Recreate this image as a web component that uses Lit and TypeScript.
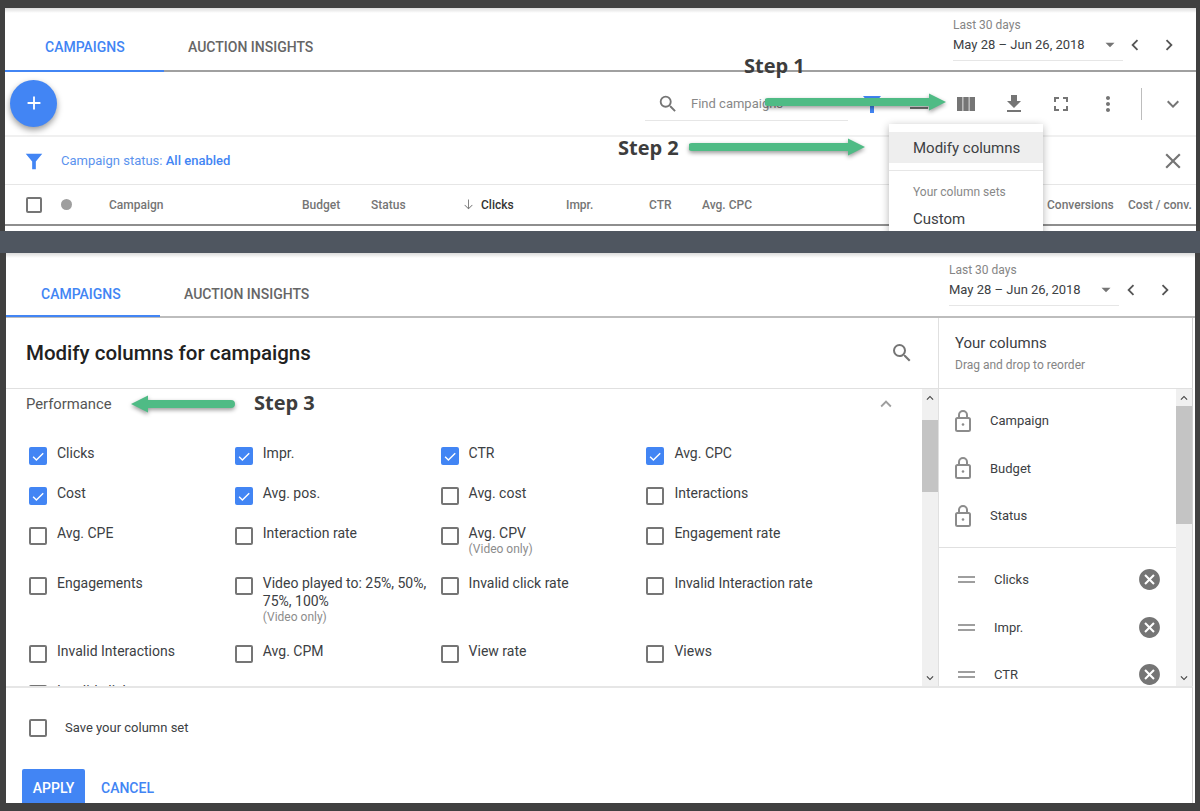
import { LitElement, html, css, svg } from "lit";
import { customElement } from "lit/decorators.js";

const P = {
  search: "M15.5 14h-.79l-.28-.27A6.471 6.471 0 0 0 16 9.5 6.5 6.5 0 1 0 9.5 16c1.61 0 3.09-.59 4.23-1.57l.27.28v.79l5 4.99L20.49 19l-4.99-5zm-6 0C7.01 14 5 11.99 5 9.5S7.01 5 9.5 5 14 7.01 14 9.5 11.99 14 9.5 14z",
  filter: "M3 4h18l-7 8.5V21h-4v-8.5z",
  segment: "M3 8h18v2H3zM3 15h18v2H3z",
  columns: "M3 5h5.5v14H3zM9.3 5h5.4v14H9.3zM15.5 5H21v14h-5.5z",
  download: "M19 9h-4V3H9v6H5l7 7 7-7zM5 18v2h14v-2H5z",
  fullscreen: "M7 14H5v5h5v-2H7v-3zm-2-4h2V7h3V5H5v5zm12 7h-3v2h5v-5h-2v3zM14 5v2h3v3h2V5h-5z",
  more: "M12 8c1.1 0 2-.9 2-2s-.9-2-2-2-2 .9-2 2 .9 2 2 2zm0 2c-1.1 0-2 .9-2 2s.9 2 2 2 2-.9 2-2-.9-2-2-2zm0 6c-1.1 0-2 .9-2 2s.9 2 2 2 2-.9 2-2-.9-2-2-2z",
  close: "M19 6.41L17.59 5 12 10.59 6.41 5 5 6.41 10.59 12 5 17.59 6.41 19 12 13.41 17.59 19 19 17.59 13.41 12z",
  down: "M16.59 8.59L12 13.17 7.41 8.59 6 10l6 6 6-6z",
  up: "M12 8l-6 6 1.41 1.41L12 10.83l4.59 4.58L18 14z",
  left: "M15.41 7.41L14 6l-6 6 6 6 1.41-1.41L10.83 12z",
  right: "M10 6L8.59 7.41 13.17 12l-4.58 4.59L10 18l6-6z",
  caret: "M6 9h12l-6 6z",
  plus: "M19 13h-6v6h-2v-6H5v-2h6V5h2v6h6z",
  arrowDown: "M12.7 4h-1.4v13.2l-5-5-.9.9 6.6 6.6 6.6-6.6-.9-.9-5 5z",
  cancel: "M12 2C6.47 2 2 6.47 2 12s4.47 10 10 10 10-4.47 10-10S17.53 2 12 2zm5 13.59L15.59 17 12 13.41 8.41 17 7 15.59 10.59 12 7 8.41 8.41 7 12 10.59 15.59 7 17 8.41 13.41 12 17 15.59z",
  check: "M9.6 16.6L5.4 12.4l-1.5 1.5 5.7 5.7 11-11-1.5-1.5z",
};

const icon = (d: string, size: number, color: string) => html`<svg
  width=${size}
  height=${size}
  viewBox="0 0 24 24"
  fill=${color}
>
  ${svg`<path d=${d}></path>`}
</svg>`;

const lock = html`<svg width="18" height="24" viewBox="0 0 18 24" fill="none" stroke="#8c8c8c" stroke-width="2">
  <rect x="2" y="9" width="14" height="13" rx="1.5"></rect>
  <path d="M5 9V6a4 4 0 0 1 8 0v3"></path>
  <circle cx="9" cy="15.5" r="1.3" fill="#8c8c8c" stroke="none"></circle>
</svg>`;

type Metric = { label: string; on?: boolean; note?: string };

const metrics: Metric[] = [
  { label: "Clicks", on: true },
  { label: "Impr.", on: true },
  { label: "CTR", on: true },
  { label: "Avg. CPC", on: true },
  { label: "Cost", on: true },
  { label: "Avg. pos.", on: true },
  { label: "Avg. cost" },
  { label: "Interactions" },
  { label: "Avg. CPE" },
  { label: "Interaction rate" },
  { label: "Avg. CPV", note: "(Video only)" },
  { label: "Engagement rate" },
  { label: "Engagements" },
  { label: "Video played to: 25%, 50%, 75%, 100%", note: "(Video only)" },
  { label: "Invalid click rate" },
  { label: "Invalid Interaction rate" },
  { label: "Invalid Interactions" },
  { label: "Avg. CPM" },
  { label: "View rate" },
  { label: "Views" },
  { label: "Invalid clicks" },
];

const checkbox = (on = false) =>
  html`<span class="box ${on ? "box--on" : ""}">${on ? icon(P.check, 16, "#fff") : ""}</span>`;

@customElement("date-range")
export class DateRange extends LitElement {
  static styles = css`
    :host {
      display: flex;
      align-items: flex-start;
      font-family: Roboto, sans-serif;
    }
    .range {
      width: 170px;
      height: 45px;
      border-bottom: 1px solid #e6e6e6;
      box-sizing: border-box;
    }
    .range__label {
      font-size: 12px;
      line-height: 16px;
      color: #858585;
      padding-top: 1px;
    }
    .range__value {
      display: flex;
      align-items: center;
      justify-content: space-between;
      font-size: 13px;
      line-height: 20px;
      color: #3c4043;
      margin-top: 2px;
    }
    .range__value svg {
      margin-right: 4px;
    }
    .nav {
      display: flex;
      gap: 12px;
      margin: 18px 0 0 1px;
    }
    svg {
      display: block;
    }
  `;

  render() {
    return html`<div class="range">
        <div class="range__label">Last 30 days</div>
        <div class="range__value">May 28 – Jun 26, 2018 ${icon(P.caret, 18, "#757575")}</div>
      </div>
      <div class="nav">${icon(P.left, 22, "#555")}${icon(P.right, 22, "#555")}</div>`;
  }
}

@customElement("app-root")
export class AppRoot extends LitElement {
  static styles = css`
    :host {
      display: flex;
      flex-direction: column;
      width: 1200px;
      height: 811px;
      overflow: hidden;
      background: #404040;
      font-family: Roboto, sans-serif;
      color: #3c4043;
      position: relative;
    }
    svg {
      display: block;
      flex: none;
    }

    /* top capture */
    .shot {
      background: #fff;
      margin: 8px 4px 0 5px;
      height: 223px;
      position: relative;
      overflow: hidden;
      flex: none;
    }
    .band {
      height: 22px;
      background: #4f5660;
      flex: none;
    }
    .shot2 {
      background: #fff;
      margin: 0 5px 8px 6px;
      flex: 1;
      min-height: 0;
      display: flex;
      flex-direction: column;
      overflow: hidden;
    }
    .shade {
      height: 5px;
      margin-bottom: -5px;
      background: linear-gradient(rgba(0, 0, 0, 0.14), rgba(0, 0, 0, 0));
    }

    /* tabs */
    .tabs {
      height: 64px;
      display: flex;
      justify-content: space-between;
      border-bottom: 2px solid #a0a0a0;
      box-sizing: border-box;
      flex: none;
    }
    .tabs__list {
      display: flex;
    }
    .tab {
      display: flex;
      align-items: center;
      font-size: 14px;
      font-weight: 500;
      color: #666;
      height: 64px;
      box-sizing: border-box;
      padding-top: 14px;
    }
    .tab--active {
      color: #4285f4;
      width: 159px;
      padding-left: 40px;
      padding-top: 16px;
      border-bottom: 2px solid #4285f4;
    }
    .tab--second {
      padding-left: 24px;
    }
    .tabs date-range {
      margin: 8px 16px 0 0;
    }
    .tabs--bottom {
      height: 65px;
      border-bottom-color: #bdbdbd;
    }
    .tabs--bottom .tab {
      padding-top: 17px;
    }
    .tabs--bottom .tab--active {
      width: 154px;
      padding-left: 35px;
      padding-top: 19px;
    }
    .tabs--bottom date-range {
      margin: 8px 19px 0 0;
    }

    /* toolbar */
    .toolbar {
      height: 65px;
      display: flex;
      align-items: center;
      border-bottom: 2px solid #f0f0f0;
      box-sizing: border-box;
    }
    .fab {
      width: 47px;
      height: 47px;
      flex: none;
      margin: -1px 0 0 5px;
      border-radius: 50%;
      background: #4285f4;
      box-shadow: 0 3px 6px rgba(0, 0, 0, 0.4);
      display: flex;
      align-items: center;
      justify-content: center;
    }
    .find {
      margin: 1px 0 0 588px;
      width: 203px;
      height: 33px;
      flex: none;
      padding-left: 12px;
      box-sizing: border-box;
      display: flex;
      align-items: center;
      gap: 12px;
      font-size: 13px;
      color: #888;
      border-bottom: 1px solid #e6e6e6;
    }
    .tools {
      display: flex;
      align-items: center;
      margin-left: 12px;
      flex: none;
    }
    .tools > svg {
      margin-right: 23.2px;
    }
    .tools__sep {
      width: 1px;
      height: 32px;
      background: #bdbdbd;
      margin: 0 19px 0 -2px;
    }

    /* filter row */
    .filter {
      height: 48px;
      display: flex;
      align-items: center;
      padding: 0 10px 0 18px;
      border-bottom: 1px solid #e6e6e6;
      box-sizing: border-box;
      font-size: 13px;
      color: #5b93ee;
    }
    .filter b {
      font-weight: 500;
      color: #4285f4;
    }
    .filter__text {
      margin-left: 16px;
      flex: 1;
    }

    /* column header */
    .thead {
      display: grid;
      grid-template-columns: 35px 48px 193px 69px 94px 101px 83px 53px 345px 81px auto;
      align-items: center;
      height: 41px;
      padding-left: 21px;
      font-size: 12px;
      font-weight: 500;
      color: #757575;
      border-bottom: 2px solid #8e8e8e;
      box-sizing: border-box;
    }
    .thead .box {
      width: 16px;
      height: 16px;
    }
    .dot {
      width: 11px;
      height: 11px;
      border-radius: 50%;
      background: #9e9e9e;
    }
    .thead__sort {
      display: flex;
      align-items: center;
      gap: 5px;
      margin-left: -4px;
      color: #333;
    }

    /* column menu */
    .menu {
      position: absolute;
      left: 884px;
      top: 116px;
      width: 154px;
      height: 130px;
      background: #fff;
      box-shadow: 0 2px 8px rgba(0, 0, 0, 0.3);
      padding-top: 8px;
      box-sizing: border-box;
    }
    .menu__item {
      height: 31px;
      line-height: 32px;
      padding-left: 24px;
      font-size: 15px;
      background: #eee;
    }
    .menu__rule {
      height: 1px;
      background: #e6e6e6;
      margin-top: 7px;
    }
    .menu__head {
      padding: 14px 0 0 24px;
      font-size: 12px;
      line-height: 14px;
      color: #888;
    }
    .menu__custom {
      padding: 12px 0 0 24px;
      font-size: 15px;
      line-height: 16px;
    }

    /* step notes */
    .step {
      position: absolute;
      font-family: "Open Sans", sans-serif;
      font-weight: 700;
      font-size: 20px;
      line-height: 26px;
      color: #3d3d3d;
      white-space: nowrap;
    }
    .arrow {
      position: absolute;
      filter: drop-shadow(0 2px 2px rgba(0, 0, 0, 0.4));
    }

    /* modify columns */
    .editor {
      flex: 1;
      min-height: 0;
      display: grid;
      grid-template-columns: 933px 1fr;
      grid-template-rows: 71px 297px 1fr;
    }
    .editor__title {
      display: flex;
      align-items: center;
      justify-content: space-between;
      padding: 0 24px 0 20px;
      font-size: 20.5px;
      font-weight: 500;
      color: #212121;
      border-bottom: 1px solid #e0e0e0;
      border-right: 1px solid #e0e0e0;
    }
    .yours {
      padding: 16px 0 0 16px;
      margin-right: 2px;
      border-bottom: 1px solid #e0e0e0;
      border-right: 1px solid #d0d0d0;
    }
    .yours__title {
      font-size: 15px;
      line-height: 18px;
    }
    .yours__hint {
      font-size: 12px;
      line-height: 14px;
      color: #858585;
      margin-top: 6px;
    }
    .pane {
      display: flex;
      overflow: hidden;
      min-height: 0;
    }
    .pane--left {
      border-right: 1px solid #e0e0e0;
    }
    .pane--right {
      margin-right: 2px;
      border-right: 1px solid #d0d0d0;
    }
    .pane__body {
      flex: 1;
      min-width: 0;
      overflow: hidden;
    }
    .scroll {
      width: 16px;
      background: #f0f0f0;
      display: flex;
      flex-direction: column;
      flex: none;
    }
    .scroll__cap {
      height: 17px;
      display: flex;
      align-items: center;
      justify-content: center;
      flex: none;
    }
    .scroll__thumb {
      background: #c4c4c4;
      flex: none;
    }
    .scroll__gap {
      flex: 1;
    }
    .perf {
      display: flex;
      align-items: center;
      justify-content: space-between;
      padding: 4px 25px 0 20px;
      font-size: 14.8px;
      line-height: 20px;
      color: #555;
    }
    .grid {
      display: grid;
      grid-template-columns: repeat(4, 205.8px);
      row-gap: 18px;
      padding: 32px 0 0 23px;
    }
    .metric {
      display: flex;
      gap: 10px;
      min-height: 22px;
      font-size: 14px;
      line-height: 18px;
      padding-right: 6px;
      box-sizing: border-box;
    }
    .metric__note {
      display: block;
      font-size: 12px;
      line-height: 14px;
      color: #8c8c8c;
    }
    .metric__label {
      margin-top: -3px;
      padding-bottom: 3px;
    }
    .box {
      width: 18px;
      height: 18px;
      box-sizing: border-box;
      border: 2px solid #757575;
      border-radius: 2px;
      display: flex;
      align-items: center;
      justify-content: center;
      flex: none;
    }
    .box--on {
      background: #4285f4;
      border-color: #4285f4;
    }
    .locked {
      padding: 8px 0 0 15px;
      border-bottom: 1px solid #e0e0e0;
      height: 159px;
      box-sizing: border-box;
    }
    .locked__row {
      display: flex;
      align-items: center;
      height: 47.5px;
      gap: 18px;
      font-size: 13px;
    }
    .chosen {
      padding: 8px 14px 0 19px;
    }
    .chosen__row {
      display: flex;
      align-items: center;
      height: 47.5px;
      font-size: 13px;
    }
    .chosen__handle {
      width: 17px;
      height: 7px;
      border-top: 2px solid #9e9e9e;
      border-bottom: 2px solid #9e9e9e;
      box-sizing: border-box;
      margin-right: 19px;
    }
    .chosen__name {
      flex: 1;
    }
    .foot {
      grid-column: 1 / 3;
      margin-right: 2px;
      border-top: 2px solid #e6e6e6;
      border-right: 1px solid #d0d0d0;
      padding: 31px 0 0 23px;
    }
    .foot__save {
      display: flex;
      align-items: center;
      gap: 18px;
      font-size: 13px;
    }
    .foot__save-text {
      margin-top: -2px;
    }
    .foot__actions {
      display: flex;
      align-items: center;
      gap: 16px;
      margin: 32px 0 0 -7px;
      font-size: 14px;
      font-weight: 500;
    }
    .foot__apply {
      width: 63px;
      height: 38px;
      background: #4285f4;
      color: #fff;
      border-radius: 2px;
      display: flex;
      align-items: center;
      justify-content: center;
    }
    .foot__cancel {
      color: #4285f4;
    }
  `;

  renderTabs() {
    return html`<div class="tabs__list">
        <div class="tab tab--active">CAMPAIGNS</div>
        <div class="tab tab--second">AUCTION INSIGHTS</div>
      </div>
      <date-range></date-range>`;
  }

  renderScroll(top: number, thumb: number) {
    return html`<div class="scroll">
      <div class="scroll__cap">${icon(P.up, 14, "#444")}</div>
      <div class="scroll__thumb" style="margin-top:${top}px;height:${thumb}px"></div>
      <div class="scroll__gap"></div>
      <div class="scroll__cap">${icon(P.down, 14, "#444")}</div>
    </div>`;
  }

  renderMetric(m: Metric) {
    return html`<div class="metric">
      ${checkbox(m.on)}
      <div class="metric__label">
        ${m.label}${m.note ? html`<span class="metric__note">${m.note}</span>` : ""}
      </div>
    </div>`;
  }

  render() {
    return html`<div class="shot">
        <div class="shade"></div>
        <div class="tabs">${this.renderTabs()}</div>
        <div class="toolbar">
          <div class="fab">${icon(P.plus, 22, "#fff")}</div>
          <div class="find">${icon(P.search, 22, "#757575")}Find campaigns</div>
          <div class="tools">
            ${icon(P.filter, 24, "#4285f4")} ${icon(P.segment, 24, "#757575")}
            ${icon(P.columns, 24, "#757575")} ${icon(P.download, 24, "#757575")}
            ${icon(P.fullscreen, 24, "#757575")} ${icon(P.more, 24, "#757575")}
            <div class="tools__sep"></div>
            ${icon(P.down, 24, "#757575")}
          </div>
        </div>
        <div class="filter">
          ${icon(P.filter, 22, "#4285f4")}
          <div class="filter__text">Campaign status: <b>All enabled</b></div>
          ${icon(P.close, 26, "#757575")}
        </div>
        <div class="thead">
          <span class="box"></span>
          <span class="dot"></span>
          <span>Campaign</span>
          <span>Budget</span>
          <span>Status</span>
          <span class="thead__sort">${icon(P.arrowDown, 15, "#757575")}Clicks</span>
          <span>Impr.</span>
          <span>CTR</span>
          <span>Avg. CPC</span>
          <span>Conversions</span>
          <span>Cost / conv.</span>
        </div>
        <div class="menu">
          <div class="menu__item">Modify columns</div>
          <div class="menu__rule"></div>
          <div class="menu__head">Your column sets</div>
          <div class="menu__custom">Custom</div>
        </div>
      </div>
      <div class="band"></div>
      <div class="shot2">
        <div class="shade"></div>
        <div class="tabs tabs--bottom">${this.renderTabs()}</div>
        <div class="editor">
          <div class="editor__title">Modify columns for campaigns ${icon(P.search, 24, "#757575")}</div>
          <div class="yours">
            <div class="yours__title">Your columns</div>
            <div class="yours__hint">Drag and drop to reorder</div>
          </div>
          <div class="pane pane--left">
            <div class="pane__body">
              <div class="perf">Performance ${icon(P.up, 22, "#9e9e9e")}</div>
              <div class="grid">${metrics.map((m) => this.renderMetric(m))}</div>
            </div>
            ${this.renderScroll(14, 72)}
          </div>
          <div class="pane pane--right">
            <div class="pane__body">
              <div class="locked">
                ${["Campaign", "Budget", "Status"].map(
                  (c) => html`<div class="locked__row">${lock}${c}</div>`
                )}
              </div>
              <div class="chosen">
                ${["Clicks", "Impr.", "CTR"].map(
                  (c) => html`<div class="chosen__row">
                    <span class="chosen__handle"></span>
                    <span class="chosen__name">${c}</span>
                    ${icon(P.cancel, 25, "#757575")}
                  </div>`
                )}
              </div>
            </div>
            ${this.renderScroll(0, 118)}
          </div>
          <div class="foot">
            <div class="foot__save">${checkbox()}<span class="foot__save-text">Save your column set</span></div>
            <div class="foot__actions">
              <div class="foot__apply">APPLY</div>
              <div class="foot__cancel">CANCEL</div>
            </div>
          </div>
        </div>
      </div>

      <div class="step" style="left:744px;top:53px">Step 1</div>
      <div class="step" style="left:618px;top:135px">Step 2</div>
      <div class="step" style="left:254px;top:390px">Step 3</div>
      <svg class="arrow" style="left:765px;top:93px" width="182" height="18" viewBox="0 0 182 18">
        <path d="M3 5h161V.5L181 9l-17 8.5V13H3a4 4 0 0 1 0-8z" fill="#4fbb85"></path>
      </svg>
      <svg class="arrow" style="left:689px;top:138px" width="178" height="18" viewBox="0 0 178 18">
        <path d="M3 5h156V.5L176 9l-17 8.5V13H3a4 4 0 0 1 0-8z" fill="#4fbb85"></path>
      </svg>
      <svg class="arrow" style="left:130px;top:395px" width="105" height="18" viewBox="0 0 105 18">
        <path d="M101 5H18V.5L1 9l17 8.5V13h83a4 4 0 0 0 0-8z" fill="#4fbb85"></path>
      </svg>`;
  }
}
